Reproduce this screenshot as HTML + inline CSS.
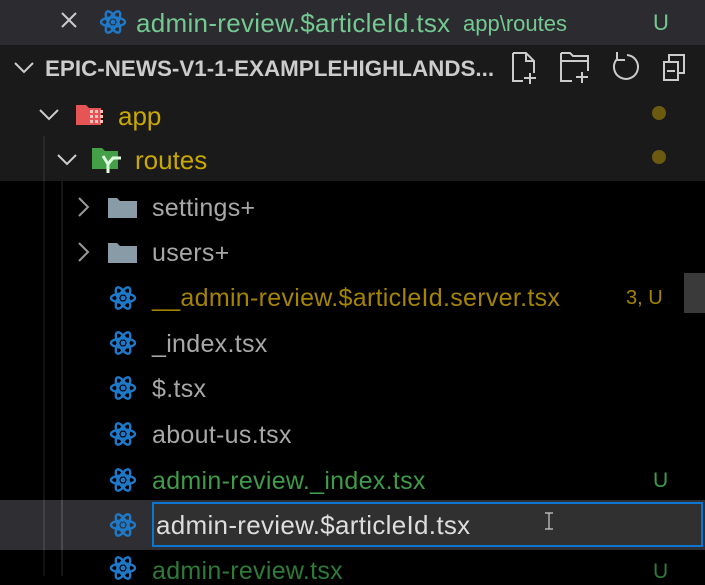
<!DOCTYPE html>
<html><head><style>
*{margin:0;padding:0;box-sizing:border-box}
body{width:705px;height:576px;overflow:hidden;background:#000;font-family:"Liberation Sans",sans-serif;position:relative}
.abs{position:absolute;white-space:nowrap}
.t{font-size:25px;line-height:1;letter-spacing:0.3px}
svg{position:absolute;overflow:visible}
</style></head><body>
<svg width="0" height="0" style="position:absolute"><defs>
<g id="atom"><ellipse cx="0" cy="0" rx="12" ry="4.6" fill="none" stroke="#1f79c9" stroke-width="2.4"/><ellipse cx="0" cy="0" rx="12" ry="4.6" fill="none" stroke="#1f79c9" stroke-width="2.4" transform="rotate(60)"/><ellipse cx="0" cy="0" rx="12" ry="4.6" fill="none" stroke="#1f79c9" stroke-width="2.4" transform="rotate(-60)"/><circle r="2.4" fill="#1f79c9"/></g>
<g id="chev"><path d="M-5,-9 L4,0 L-5,9" fill="none" stroke="#999" stroke-width="2"/></g>
<g id="chevd"><path d="M-9,-4 L0,5 L9,-4" fill="none" stroke="#ccc" stroke-width="2"/></g>
</defs></svg>

<!-- tab bar -->
<div class="abs" style="left:0;top:0;width:705px;height:45px;background:#2c2c30"></div>
<svg style="left:0;top:0" width="705" height="45">
<path d="M62,13 L76,27 M76,13 L62,27" stroke="#ccc" stroke-width="2"/>
<use href="#atom" x="113" y="22" />
</svg>
<div class="abs" style="left:136px;top:8px;color:#73c991;font-size:26px;letter-spacing:0.3px">admin-review.$articleId.tsx</div>
<div class="abs" style="left:463px;top:11px;color:#73c991;font-size:22px">app\routes</div>
<div class="abs" style="left:653px;top:10px;color:#73c991;font-size:22px">U</div>

<!-- header area -->
<div class="abs" style="left:0;top:45px;width:705px;height:136px;background:#1a1a1a"></div>
<svg style="left:0;top:45px" width="705" height="136">
<use href="#chevd" x="24" y="22"/>
<g fill="none" stroke="#ccc" stroke-width="2">
<path d="M513,8 L526,8 L534,16 L534,28 M526,8 L526,16 L534,16 M513,8 L513,36 L523,36 M530,28 L530,39 M524,33 L536,33"/>
<path d="M561,8 L570,8 L573,11 L588,11 L588,26 M561,8 L561,36 L572,36 M561,16 L588,16 M582,27 L582,38 M576,32 L588,32"/>
<path d="M617,14 A12,12 0 1 0 627,10 M617,7 L617,15 L625,15"/>
<path d="M664,17 L664,35 L678,35 L678,17 Z M669,17 L669,10 L684,10 L684,28 L678,28 M667,26 L675,26"/>
</g>
<use href="#chevd" x="49" y="69"/>
<use href="#chevd" x="67" y="114"/>
<!-- app folder -->
<path d="M76,60 L86,60 L89,63 L101,63 L101,80 L76,80 Z" fill="#e65555"/>
<g fill="#ffc0c0"><rect x="90" y="65" width="3" height="3"/><rect x="95" y="65" width="3" height="3"/><rect x="100" y="65" width="3" height="3"/><rect x="90" y="70" width="3" height="3"/><rect x="95" y="70" width="3" height="3"/><rect x="100" y="70" width="3" height="3"/><rect x="90" y="75" width="3" height="3"/><rect x="95" y="75" width="3" height="3"/><rect x="100" y="75" width="3" height="3"/></g>
<!-- routes folder -->
<path d="M92,103 L102,103 L105,106 L118,106 L118,124 L92,124 Z" fill="#43a047"/>
<path d="M108,128 L108,119 L113,113 L121,113 M103,111 L108,119" stroke="#e0ffe0" stroke-width="3" fill="none"/>
<circle cx="659" cy="68" r="7" fill="#6b5a10"/>
<circle cx="659" cy="112" r="7" fill="#6b5a10"/>
<line x1="44" y1="91" x2="44" y2="136" stroke="#3a3a3a" stroke-width="1"/>
</svg>
<div class="abs" style="left:45px;top:56px;color:#ccc;font-size:22.4px;font-weight:bold">EPIC-NEWS-V1-1-EXAMPLEHIGHLANDS...</div>
<div class="abs" style="left:118px;top:101px;color:#c9a800;font-size:26px">app</div>
<div class="abs" style="left:135px;top:145px;color:#c9a800;font-size:26px">routes</div>

<!-- lower list -->
<svg style="left:0;top:181px" width="705" height="395">
<line x1="44" y1="0" x2="44" y2="395" stroke="#222" stroke-width="1"/>
<line x1="62" y1="0" x2="62" y2="395" stroke="#2a2a2a" stroke-width="1"/>
<use href="#chev" x="84" y="26"/>
<use href="#chev" x="84" y="71"/>
<path d="M108,17 L117,17 L120,20 L137,20 L137,37 L108,37 Z" fill="#8a9ba8"/>
<path d="M108,62 L117,62 L120,65 L137,65 L137,82 L108,82 Z" fill="#8a9ba8"/>
<use href="#atom" x="123" y="117"/>
<use href="#atom" x="123" y="162"/>
<use href="#atom" x="123" y="207"/>
<use href="#atom" x="123" y="253"/>
<use href="#atom" x="123" y="299"/>
<rect x="684" y="92" width="21" height="40" fill="#3a3a3a"/>
</svg>
<div class="abs t" style="left:152px;top:196px;color:#a8a8a8">settings+</div>
<div class="abs t" style="left:152px;top:241px;color:#a8a8a8">users+</div>
<div class="abs t" style="left:152px;top:286px;color:#a48400">__admin-review.$articleId.server.tsx</div>
<div class="abs" style="left:626px;top:287px;color:#a48400;font-size:20px">3, U</div>
<div class="abs t" style="left:152px;top:332px;color:#a8a8a8">_index.tsx</div>
<div class="abs t" style="left:152px;top:377px;color:#a8a8a8">$.tsx</div>
<div class="abs t" style="left:152px;top:423px;color:#a8a8a8">about-us.tsx</div>
<div class="abs t" style="left:152px;top:469px;color:#3f9a4a">admin-review._index.tsx</div>
<div class="abs" style="left:653px;top:469px;color:#3f9a4a;font-size:21px">U</div>

<!-- selected row -->
<div class="abs" style="left:0;top:500px;width:705px;height:50px;background:#2f2f33"></div>
<svg style="left:0;top:500px" width="705" height="50">
<line x1="44" y1="0" x2="44" y2="50" stroke="#555"/>
<line x1="62" y1="0" x2="62" y2="50" stroke="#666"/>
<use href="#atom" x="123" y="25"/>
</svg>
<div class="abs" style="left:152px;top:502px;width:551px;height:45px;border:2px solid #0e76d0;background:#303030"></div>
<div class="abs" style="left:156px;top:510px;color:#ddd;font-size:26px;letter-spacing:0.3px">admin-review.$articleId.tsx</div>
<svg style="left:543px;top:512px" width="12" height="18"><path d="M2,1 L10,1 M6,1 L6,17 M2,17 L10,17" stroke="#ccc" stroke-width="1.2" fill="none"/></svg>

<div class="abs t" style="left:152px;top:559px;color:#2e7a38">admin-review.tsx</div>
<div class="abs" style="left:653px;top:560px;color:#2e7a38;font-size:21px">U</div>
<svg style="left:0;top:550px" width="705" height="26"><use href="#atom" x="123" y="18"/></svg>
</body></html>
